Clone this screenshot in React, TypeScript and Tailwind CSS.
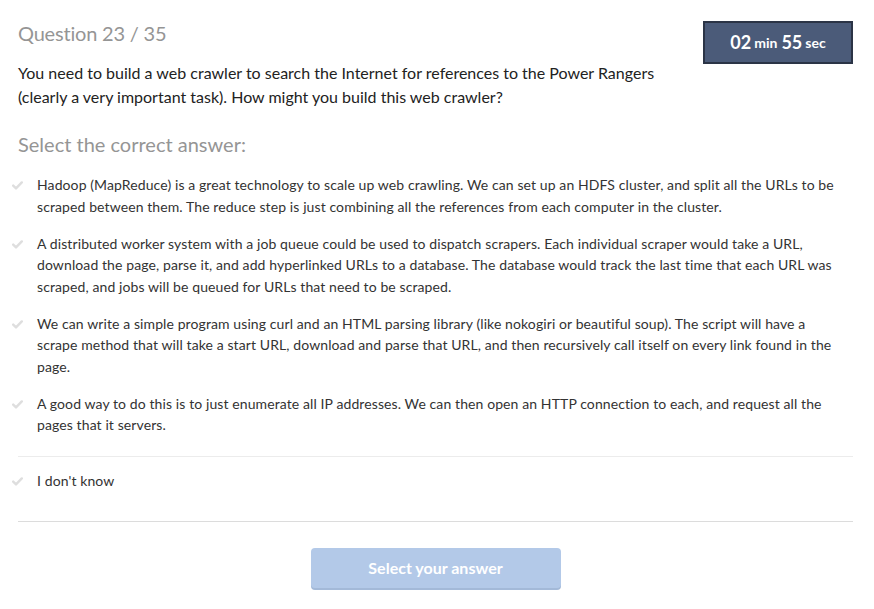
import React from "react";

interface Option {
  id: number;
  text: string;
}

const options: Option[] = [
  {
    id: 1,
    text: "Hadoop (MapReduce) is a great technology to scale up web crawling. We can set up an HDFS cluster, and split all the URLs to be scraped between them. The reduce step is just combining all the references from each computer in the cluster.",
  },
  {
    id: 2,
    text: "A distributed worker system with a job queue could be used to dispatch scrapers. Each individual scraper would take a URL, download the page, parse it, and add hyperlinked URLs to a database. The database would track the last time that each URL was scraped, and jobs will be queued for URLs that need to be scraped.",
  },
  {
    id: 3,
    text: "We can write a simple program using curl and an HTML parsing library (like nokogiri or beautiful soup). The script will have a scrape method that will take a start URL, download and parse that URL, and then recursively call itself on every link found in the page.",
  },
  {
    id: 4,
    text: "A good way to do this is to just enumerate all IP addresses. We can then open an HTTP connection to each, and request all the pages that it servers.",
  },
];

const Check: React.FC = () => (
  <svg width="11" height="9" viewBox="0 0 11 9" className="shrink-0 mt-[7px]">
    <path d="M1.2 4.6 L4 7.4 L9.8 1.4" fill="none" stroke="#dedede" strokeWidth="2.4" strokeLinecap="round" strokeLinejoin="round" />
  </svg>
);

const OptionRow: React.FC<{ text: string }> = ({ text }) => (
  <div className="flex gap-[14px] ml-[-6px]">
    <Check />
    <p className="w-[805px] text-[14px] leading-[21.5px] tracking-[0.1px] text-[#333]">{text}</p>
  </div>
);

export default function App() {
  return (
    <div className="w-[874px] h-[609px] bg-white pl-[18px] pr-[21px] pt-[21px] font-['Lato','Liberation_Sans',sans-serif] overflow-hidden">
      <div className="flex justify-between items-start">
        <h1 className="text-[20px] leading-[24px] text-[#959595] tracking-[-0.2px]">Question 23 / 35</h1>
        <div className="w-[150px] h-[43px] bg-[#4b5b79] border-2 border-[#2b3446] flex items-center justify-center text-white font-bold">
          <span className="text-[18px]">02</span>
          <span className="text-[14px] ml-[3px]">min</span>
          <span className="text-[18px] ml-[4px]">55</span>
          <span className="text-[14px] ml-[3px]">sec</span>
        </div>
      </div>
      <p className="text-[16px] leading-[24px] text-[#222] mt-[-3px] w-[660px]">
        You need to build a web crawler to search the Internet for references to the Power Rangers (clearly a very important task). How might you build this web crawler?
      </p>
      <h2 className="text-[20px] leading-[24px] text-[#959595] mt-[23px]">Select the correct answer:</h2>
      <div className="flex flex-col gap-[15.5px] mt-[18px]">
        {options.map((o) => (
          <OptionRow key={o.id} text={o.text} />
        ))}
      </div>
      <div className="border-t border-[#ececec] mt-[20px] pt-[13px] pb-[30px] border-b-[#dcdcdc] border-b">
        <OptionRow text="I don't know" />
      </div>
      <div className="flex justify-center mt-[26px]">
        <button className="w-[250px] h-[40px] rounded-[4px] bg-[#b3c9e8] text-white font-bold text-[16px] shadow-[0_2px_0_#a3b9d8]">
          Select your answer
        </button>
      </div>
    </div>
  );
}
